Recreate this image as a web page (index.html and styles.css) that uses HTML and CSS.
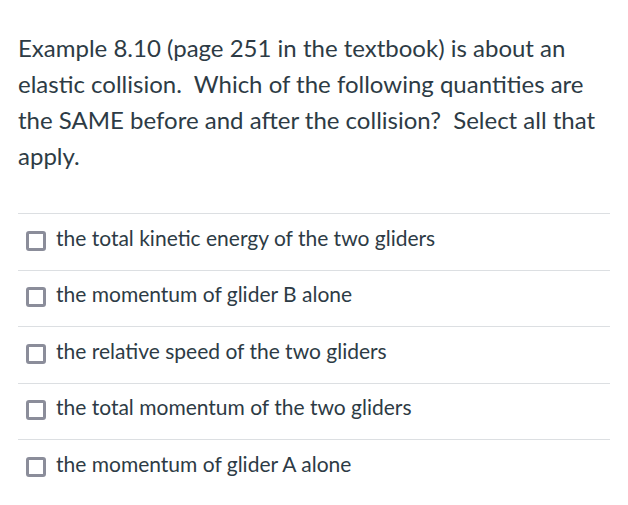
FILE: index.html
```html
<!DOCTYPE html>
<html lang="en">
<head>
<meta charset="utf-8">
<title>Question</title>
<link rel="stylesheet" href="styles.css">
</head>
<body>
<div class="question">
  <p class="prompt">Example 8.10 (page 251 in the textbook) is about an elastic collision.&nbsp; Which of the following quantities are the SAME before and after the collision?&nbsp; Select all that apply.</p>
  <div class="answers">
    <label class="answer"><span class="box"></span><span class="label">the total kinetic energy of the two gliders</span></label>
    <label class="answer"><span class="box"></span><span class="label">the momentum of glider B alone</span></label>
    <label class="answer"><span class="box"></span><span class="label">the relative speed of the two gliders</span></label>
    <label class="answer"><span class="box"></span><span class="label">the total momentum of the two gliders</span></label>
    <label class="answer"><span class="box"></span><span class="label">the momentum of glider A alone</span></label>
  </div>
</div>
</body>
</html>
```

FILE: styles.css
```css
html, body {
  margin: 0;
  padding: 0;
  background: #ffffff;
}
body {
  font-family: Lato, "Open Sans", sans-serif;
  color: #2d3b45;
}
.question {
  padding: 30px 18px 0 18px;
  width: 592px;
}
.prompt {
  margin: 0;
  font-size: 24px;
  line-height: 36px;
}
.answers {
  margin-top: 39px;
}
.answer {
  box-sizing: border-box;
  display: flex;
  align-items: center;
  height: 56.5px;
  border-top: 1px solid #dcdfe2;
  padding: 0 0 2px 8px;
}
.box {
  box-sizing: border-box;
  width: 20px;
  height: 20px;
  border: 3px solid #8b8d9a;
  border-radius: 3px;
  flex: none;
  margin-right: 10px;
}
.label {
  font-size: 21px;
  line-height: 28px;
  margin-bottom: 6px;
}
```
